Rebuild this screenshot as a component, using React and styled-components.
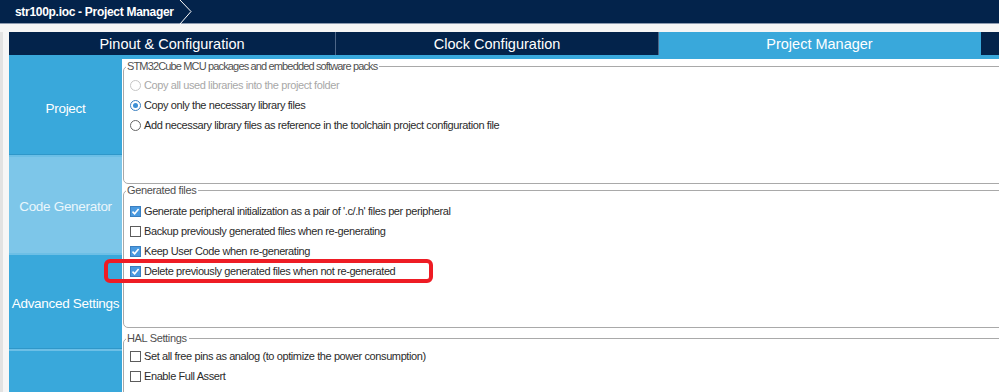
import React from 'react';
import styled, { createGlobalStyle } from 'styled-components';

const GlobalStyle = createGlobalStyle`
    html, body {
        margin: 0;
        padding: 0;
        overflow: hidden;
        background: #f5f5f5;
    }
    body {
        font-family: "Liberation Sans", Arial, sans-serif;
    }
`;

const Page = styled.div`
    width: 999px;
    height: 392px;
    overflow: hidden;
    display: flex;
    flex-direction: column;
    background: #f6f6f6;
`;

const TitleBar = styled.header`
    height: 24px;
    flex: none;
    display: flex;
    align-items: center;
    background: #03234b;
    border-bottom: 1px solid #8d9bb0;
    box-sizing: border-box;
    color: #fff;
    font-size: 12px;
    letter-spacing: -0.3px;
    font-weight: bold;
    padding-left: 15px;
    gap: 3px;

    svg {
        display: block;
    }
`;

const Workspace = styled.div`
    flex: 1;
    display: flex;
    flex-direction: column;
    margin-top: 8px;
    border-left: 3px solid #e2e2e2;
    padding-left: 6px;
    min-height: 0;
`;

const TabBar = styled.nav`
    height: 23px;
    flex: none;
    display: flex;
    background: #03234b;
`;

const Tab = styled.div`
    width: ${p => p.width}px;
    flex: none;
    display: flex;
    align-items: center;
    justify-content: center;
    font-size: 14.5px;
    color: #fff;
    background: ${p => (p.active ? '#39a8db' : '#03234b')};
    border-right: 1px solid ${p => (p.active ? '#39a8db' : '#4d6688')};
    box-sizing: border-box;
    padding-top: 1px;
`;

const BlueStrip = styled.div`
    height: 4px;
    flex: none;
    background: #39a8db;
`;

const Body = styled.div`
    flex: 1;
    display: flex;
    min-height: 0;
`;

const Sidebar = styled.aside`
    width: 113px;
    flex: none;
    display: flex;
    flex-direction: column;
    gap: 2px;
    background: #6cbfe6;
`;

const SideButton = styled.div`
    height: ${p => p.h}px;
    flex: none;
    display: flex;
    align-items: center;
    justify-content: center;
    padding-top: 4px;
    font-size: 13.5px;
    letter-spacing: -0.3px;
    white-space: nowrap;
    color: ${p => (p.selected ? '#eaf6fc' : '#fff')};
    background: ${p => (p.selected ? '#7dc6e9' : '#39a8db')};
    border-bottom: 1px solid ${p => (p.selected ? '#7dc6e9' : '#2f97c9')};
    box-sizing: border-box;
`;

const Content = styled.main`
    flex: 1;
    background: #fff;
    padding-top: 1px;
    padding-left: 1px;
    margin-right: -10px;
    display: flex;
    flex-direction: column;
`;

const Group = styled.fieldset`
    margin: ${p => p.mt || 0}px 0 0 0;
    padding: ${p => p.pt || 3}px 0 0 0;
    height: ${p => p.h}px;
    box-sizing: border-box;
    border: 1px solid #a9a9a9;
    border-radius: 5px;
    min-width: 0;
    flex: none;
`;

const Legend = styled.legend`
    font-size: 11px;
    line-height: 12px;
    letter-spacing: ${p => (p.tight ? '-0.85px' : '-0.35px')};
    color: #505050;
    padding: 0 2px 0 1px;
    margin-left: 2px;
`;

const Row = styled.div`
    position: relative;
    height: 20px;
    display: flex;
    align-items: center;
    gap: 3px;
    padding-left: 6px;
    font-size: 11px;
    letter-spacing: -0.4px;
    color: ${p => (p.disabled ? '#a8a8a8' : '#2b2b2b')};
`;

const Box = styled.span`
    width: 11px;
    height: 11px;
    box-sizing: border-box;
    flex: none;
    border: 1px solid ${p => (p.checked ? '#3a7fc0' : '#5c5c5c')};
    background: ${p => (p.checked ? '#4a9ae0' : '#fff')};
    display: flex;
    align-items: center;
    justify-content: center;

    svg {
        display: block;
    }
`;

const Radio = styled.span`
    width: 11px;
    height: 11px;
    box-sizing: border-box;
    flex: none;
    border-radius: 50%;
    border: 1px solid ${p => (p.disabled ? '#c6c6c6' : p.checked ? '#3a7fc0' : '#666')};
    background: #fff;
    display: flex;
    align-items: center;
    justify-content: center;

    &::after {
        content: '';
        width: 5px;
        height: 5px;
        border-radius: 50%;
        background: ${p => (p.checked ? '#3b8fd6' : 'transparent')};
    }
`;

const Highlight = styled.div`
    position: absolute;
    left: -20px;
    top: -2px;
    width: 329px;
    height: 24px;
    box-sizing: border-box;
    border: 4px solid #ee1c24;
    border-radius: 6px;
    pointer-events: none;
`;

const Check = ({ checked }) => (
    <Box checked={checked}>
        {checked ? (
            <svg width="9" height="9" viewBox="0 0 9 9">
                <path d="M1.5 4.6 L3.6 6.7 L7.6 2" stroke="#fff" strokeWidth="1.6" fill="none" />
            </svg>
        ) : null}
    </Box>
);

const radios = [
    { label: 'Copy all used libraries into the project folder', disabled: true },
    { label: 'Copy only the necessary library files', checked: true },
    { label: 'Add necessary library files as reference in the toolchain project configuration file' },
];

const generated = [
    { label: "Generate peripheral initialization as a pair of '.c/.h' files per peripheral", checked: true },
    { label: 'Backup previously generated files when re-generating' },
    { label: 'Keep User Code when re-generating', checked: true },
    { label: 'Delete previously generated files when not re-generated', checked: true, marked: true },
];

const hal = [
    { label: 'Set all free pins as analog (to optimize the power consumption)' },
    { label: 'Enable Full Assert' },
];

const App = () => (
    <Page>
        <GlobalStyle />
        <TitleBar>
            <span>str100p.ioc - Project Manager</span>
            <svg width="18" height="24" viewBox="0 0 18 24">
                <path d="M3 0 L14 11.5 L3 24" stroke="#fff" strokeWidth="1" fill="none" />
            </svg>
        </TitleBar>
        <Workspace>
            <TabBar>
                <Tab width={327}>Pinout &amp; Configuration</Tab>
                <Tab width={323}>Clock Configuration</Tab>
                <Tab width={322} active>Project Manager</Tab>
                <Tab width={30} />
            </TabBar>
            <BlueStrip />
            <Body>
                <Sidebar>
                    <SideButton h={96}>Project</SideButton>
                    <SideButton h={96} selected>Code Generator</SideButton>
                    <SideButton h={94}>Advanced Settings</SideButton>
                    <SideButton h={60} />
                </Sidebar>
                <Content>
                    <Group h={124} pt={3}>
                        <Legend tight>STM32Cube MCU packages and embedded software packs</Legend>
                        {radios.map(r => (
                            <Row key={r.label} disabled={r.disabled}>
                                <Radio checked={r.checked} disabled={r.disabled} />
                                {r.label}
                            </Row>
                        ))}
                    </Group>
                    <Group h={144} pt={5}>
                        <Legend>Generated files</Legend>
                        {generated.map(r => (
                            <Row key={r.label}>
                                <Check checked={r.checked} />
                                {r.label}
                                {r.marked ? <Highlight /> : null}
                            </Row>
                        ))}
                    </Group>
                    <Group h={100} pt={2} mt={4}>
                        <Legend>HAL Settings</Legend>
                        {hal.map(r => (
                            <Row key={r.label}>
                                <Check checked={r.checked} />
                                {r.label}
                            </Row>
                        ))}
                    </Group>
                </Content>
            </Body>
        </Workspace>
    </Page>
);

export default App;
